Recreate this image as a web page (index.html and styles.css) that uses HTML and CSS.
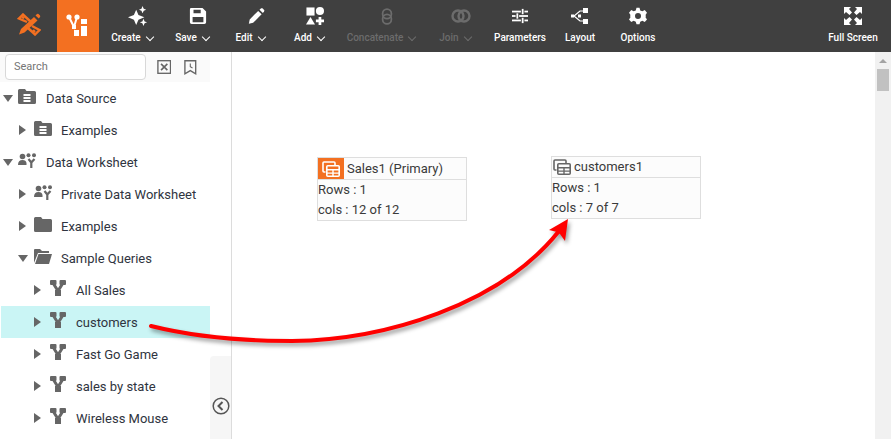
FILE: index.html
```html
<!DOCTYPE html>
<html>
<head>
<meta charset="utf-8">
<title>Data Block Composer</title>
<link rel="stylesheet" href="styles.css">
</head>
<body>
<div class="toolbar">
	<div class="logo">
		<svg width="24" height="23" viewBox="0 0 24 23"><g fill="none" stroke="#f37021" stroke-width="2.400"><path d="M10 9 L2 5.500 L6 1.500 L14 9"/><path d="M5 3.500 L7 5.500"/><path d="M15 13 L22.500 17 L18 21.500 L11 15"/><path d="M18 19 L16 17"/></g><path d="M4 16 L17 4 L20.500 7.500 L7.500 19.500 L2 21.500 Z" fill="#f37021"/><path d="M18.500 2.500 L20 1 Q21 0.500 21.500 1 L23 2.500 Q23.500 3.500 23 4 L21.800 5.500 Z" fill="#f37021"/></svg>
	</div>
	<div class="brand">
		<svg width="24" height="24" viewBox="0 0 24 24" fill="#fff"><circle cx="3" cy="4" r="2.600"/><circle cx="11" cy="4" r="2.600"/><path d="M3 4 L8 14 L11 4" fill="none" stroke="#fff" stroke-width="2"/><rect x="6" y="12" width="4" height="4"/><rect x="8" y="17" width="5" height="6"/><rect x="15" y="6" width="6" height="5"/><rect x="15" y="13" width="6" height="10"/></svg>
	</div>
	<div class="tool t-create has-menu">
		<svg width="20" height="24" viewBox="0 0 22 24" fill="#fff"><path d="M9 5 L11.500 11 L18 13.500 L11.500 16 L9 22 L6.500 16 L0 13.500 L6.500 11 Z"/><path d="M16 1 L17.300 4 L20 5 L17.300 6.200 L16 9 L14.800 6.200 L12 5 L14.800 4 Z"/><path d="M17 15 L18.300 18 L21 19 L18.300 20 L17 23 L15.800 20 L13 19 L15.800 18 Z"/></svg>
		<span class="label">Create <i class="chev"></i></span>
	</div>
	<div class="tool t-save has-menu">
		<svg width="18" height="24" viewBox="0 0 20 20" fill="#fff"><path fill-rule="evenodd" d="M2 1 H15 L19 5 V17 Q19 19 17 19 H3 Q1 19 1 17 V3 Q1 1 2 1 Z M5 3 V7 H13 V3 Z M4 11 V17 H16 V11 Z"/><rect x="10" y="3.500" width="2" height="3" fill="#404040"/></svg>
		<span class="label">Save <i class="chev"></i></span>
	</div>
	<div class="tool t-edit has-menu">
		<svg width="17" height="24" viewBox="0 0 20 20" fill="#fff"><path d="M1 19 L2 14 L12 4 L16 8 L6 18 Z"/><path d="M13.500 2.500 L15.500 1 Q16.500 0.500 17 1 L19 3 Q19.500 3.700 19 4.500 L17.500 6.500 Z"/></svg>
		<span class="label">Edit <i class="chev"></i></span>
	</div>
	<div class="tool t-add has-menu">
		<svg width="18" height="24" viewBox="0 0 20 20" fill="#fff"><rect x="0.500" y="0.500" width="9" height="9"/><circle cx="15.500" cy="4.500" r="4.500"/><path d="M5 11 L10 19.500 H0 Z"/><path d="M14 11 H17 V14 H20 V17 H17 V20 H14 V17 H11 V14 H14 Z"/></svg>
		<span class="label">Add <i class="chev"></i></span>
	</div>
	<div class="tool t-concat off has-menu">
		<svg width="14" height="24" viewBox="0 0 16 24" fill="none" stroke="#6c6c6c" stroke-width="2"><rect x="3" y="4" width="10" height="11" rx="5"/><rect x="3" y="10" width="10" height="11" rx="5"/></svg>
		<span class="label">Concatenate <i class="chev"></i></span>
	</div>
	<div class="tool t-join off has-menu">
		<svg width="20" height="24" viewBox="0 0 20 24" fill="none" stroke="#6c6c6c" stroke-width="2.400"><circle cx="7" cy="12" r="5.500"/><circle cx="13" cy="12" r="5.500"/></svg>
		<span class="label">Join <i class="chev"></i></span>
	</div>
	<div class="tool t-param">
		<svg width="16" height="24" viewBox="0 0 18 18" fill="#fff"><rect x="0" y="3" width="10" height="2"/><rect x="14" y="3" width="4" height="2"/><rect x="11" y="1" width="2" height="6"/><rect x="0" y="8" width="4" height="2"/><rect x="8" y="8" width="10" height="2"/><rect x="5" y="6" width="2" height="6"/><rect x="0" y="13" width="10" height="2"/><rect x="14" y="13" width="4" height="2"/><rect x="11" y="11" width="2" height="6"/></svg>
		<span class="label">Parameters</span>
	</div>
	<div class="tool t-layout">
		<svg width="18" height="24" viewBox="0 0 18 18"><path d="M3 9 L9 4 H13 M3 9 L9 14 H13 M7 9 H10" fill="none" stroke="#fff" stroke-width="1.200"/><rect x="0" y="7.500" width="3" height="3" fill="#fff"/><rect x="7" y="7.500" width="3" height="3" fill="#fff"/><rect x="12" y="1" width="5" height="5" fill="#fff"/><rect x="12" y="12" width="5" height="5" fill="#fff"/></svg>
		<span class="label">Layout</span>
	</div>
	<div class="tool t-options">
		<svg width="18" height="24" viewBox="0 0 24 24" fill="#fff"><path fill-rule="evenodd" d="M10 1 H14 L15 4.500 L17.800 5.700 L21 4 L24 7.500 L22 10.500 L22.500 12 L22 13.500 L24 16.500 L21 20 L17.800 18.300 L15 19.500 L14 23 H10 L9 19.500 L6.200 18.300 L3 20 L0 16.500 L2 13.500 L1.500 12 L2 10.500 L0 7.500 L3 4 L6.200 5.700 L9 4.500 Z M12 8 A4 4 0 1 0 12 16 A4 4 0 1 0 12 8 Z"/></svg>
		<span class="label">Options</span>
	</div>
	<div class="tool t-full">
		<svg width="18" height="24" viewBox="0 0 18 18" fill="#fff"><path d="M0 0 H7 L5 2 L8 5.500 L5.500 8 L2 5 L0 7 Z"/><path d="M18 0 H11 L13 2 L10 5.500 L12.500 8 L16 5 L18 7 Z"/><path d="M0 18 H7 L5 16 L8 12.500 L5.500 10 L2 13 L0 11 Z"/><path d="M18 18 H11 L13 16 L10 12.500 L12.500 10 L16 13 L18 11 Z"/></svg>
		<span class="label">Full Screen</span>
	</div>
</div>

<svg width="0" height="0" class="defs">
	<symbol id="ds" viewBox="0 0 18 15"><path fill-rule="evenodd" d="M1.500 0 H7 L8.500 2 H16.500 Q18 2 18 3.500 V13.500 Q18 15 16.500 15 H1.500 Q0 15 0 13.500 V1.500 Q0 0 1.500 0 Z M5.500 5 V7 H12.500 V5 Z M5.500 8 V10 H12.500 V8 Z M5.500 11 V13 H12.500 V11 Z"/></symbol>
	<symbol id="ws" viewBox="0 0 18 15"><circle cx="4.500" cy="3.500" r="2.800"/><path d="M0 12 Q0 7 4.500 7 Q8 7 8.500 10 V12 Z"/><circle cx="10.500" cy="2.200" r="2"/><circle cx="16" cy="2.200" r="2"/><path d="M10.500 6 L13.300 9.500 L16.500 6 M13.300 9.500 V15" fill="none" stroke="#666" stroke-width="2.200"/></symbol>
	<symbol id="q" viewBox="0 0 16 16"><rect x="0" y="0" width="6.500" height="5" rx="1"/><rect x="9.500" y="0" width="6.500" height="5" rx="1"/><rect x="5" y="10" width="6" height="6"/><path d="M3 3 L8 11 L13 3" fill="none" stroke="#666" stroke-width="3"/></symbol>
	<symbol id="tbl" viewBox="0 0 18 16"><path d="M3.500 11 H2 Q1 11 1 10 V2 Q1 1 2 1 H12 Q13 1 13 2 V4" fill="none" stroke="currentColor" stroke-width="1.600"/><rect x="4.800" y="4.800" width="12.400" height="10.400" rx="1" fill="none" stroke="currentColor" stroke-width="1.600"/><path d="M5 8 H17 V9.500 H11.700 V11.500 H17 V12.700 H11.700 V15 H10.300 V12.700 H5 V11.500 H10.300 V9.500 H5 Z" fill="currentColor"/></symbol>
</svg>

<div class="main">
	<div class="sidebar">
		<div class="search-row">
			<input class="search" placeholder="Search">
			<svg class="search-icon" width="16" height="16" viewBox="0 0 16 16" fill="none" stroke="#666" stroke-width="1.500"><rect x="1" y="1" width="14" height="14"/><path d="M4.500 4.500 L11.500 11.500 M11.500 4.500 L4.500 11.500" stroke-width="1.800"/></svg>
			<svg class="search-icon" width="14" height="17" viewBox="0 0 14 17" fill="none" stroke="#666" stroke-width="1.500"><path d="M1 1 H13 V15.500 L7 12 L1 15.500 Z"/><path d="M7 4 V7.500 L9.500 9" stroke-width="1.200"/></svg>
		</div>
		<div class="tree">
			<div class="row lvl0"><i class="tri down"></i><svg class="ico"><use href="#ds"/></svg><span>Data Source</span></div>
			<div class="row lvl1"><i class="tri"></i><svg class="ico"><use href="#ds"/></svg><span>Examples</span></div>
			<div class="row lvl0"><i class="tri down"></i><svg class="ico"><use href="#ws"/></svg><span>Data Worksheet</span></div>
			<div class="row lvl1"><i class="tri"></i><svg class="ico"><use href="#ws"/></svg><span>Private Data Worksheet</span></div>
			<div class="row lvl1"><i class="tri"></i><svg class="ico" viewBox="0 0 18 15"><path d="M1.500 0 H7 L8.500 2 H16.500 Q18 2 18 3.500 V13.500 Q18 15 16.500 15 H1.500 Q0 15 0 13.500 V1.500 Q0 0 1.500 0 Z"/></svg><span>Examples</span></div>
			<div class="row lvl1"><i class="tri down"></i><svg class="ico" viewBox="0 0 18 15"><path d="M1 0 H6 L8 2 H15 V4 H4 L0 14 V1 Q0 0 1 0 Z"/><path d="M4.500 5 H18 L15 15 H1 Z"/></svg><span>Sample Queries</span></div>
			<div class="row lvl2"><i class="tri"></i><svg class="ico qi"><use href="#q"/></svg><span>All Sales</span></div>
			<div class="row lvl2 selected"><i class="tri"></i><svg class="ico qi"><use href="#q"/></svg><span>customers</span></div>
			<div class="row lvl2"><i class="tri"></i><svg class="ico qi"><use href="#q"/></svg><span>Fast Go Game</span></div>
			<div class="row lvl2"><i class="tri"></i><svg class="ico qi"><use href="#q"/></svg><span>sales by state</span></div>
			<div class="row lvl2"><i class="tri"></i><svg class="ico qi"><use href="#q"/></svg><span>Wireless Mouse</span></div>
		</div>
		<div class="collapse">
			<svg width="18" height="18" viewBox="0 0 18 18" fill="none" stroke="#555" stroke-width="1.500"><circle cx="9" cy="9" r="7.800"/><path d="M10.500 5 L6.500 9 L10.500 13" stroke-width="2"/></svg>
		</div>
	</div>
	<div class="canvas">
		<div class="block block-sales">
			<div class="block-head"><span class="block-icon primary"><svg width="18" height="16"><use href="#tbl"/></svg></span>Sales1 (Primary)</div>
			<div class="block-body"><div>Rows : 1</div><div>cols : 12 of 12</div></div>
		</div>
		<div class="block block-customers">
			<div class="block-head"><span class="block-icon"><svg width="18" height="16"><use href="#tbl"/></svg></span>customers1</div>
			<div class="block-body"><div>Rows : 1</div><div>cols : 7 of 7</div></div>
		</div>
		<div class="scrollbar"><i class="sb-up"></i><div class="sb-thumb"></div></div>
	</div>
	<svg class="arrow" width="891" height="439" viewBox="0 0 891 439">
		<path d="M151 326 C 195 337, 245 341, 292 341 C 385 340, 500 305, 559 231" fill="none" stroke="#ff0000" stroke-width="4" stroke-linecap="round"/>
		<path d="M568 219 L549 230 L557 232 L560 234 L565 241 Z" fill="#ff0000"/>
	</svg>
</div>
</body>
</html>
```

FILE: styles.css
```css
* {
	box-sizing: border-box;
}

html, body {
	margin: 0;
	padding: 0;
	width: 891px;
	height: 439px;
	overflow: hidden;
}

body {
	font-family: Roboto, "Liberation Sans", sans-serif;
	background: #fff;
	color: #2b2b2b;
	position: relative;
}

.defs {
	position: absolute;
}

/* top bar */
.toolbar {
	display: flex;
	height: 52px;
	background: #404040;
}

.logo {
	width: 57px;
	display: flex;
	align-items: center;
	justify-content: center;
	padding-bottom: 4px;
}

.brand {
	width: 42px;
	background: #f37021;
	display: flex;
	align-items: center;
	justify-content: center;
	padding-bottom: 2px;
}

.tool {
	display: flex;
	flex-direction: column;
	align-items: center;
	padding-top: 4px;
	color: #fff;
}

.tool svg {
	display: block;
}

.has-menu svg {
	margin-left: 10px;
}

.label {
	font-size: 10px;
	font-weight: 500;
	line-height: 12px;
	margin-top: 4px;
	white-space: nowrap;
	display: flex;
	align-items: center;
}

.chev {
	display: inline-block;
	width: 6px;
	height: 6px;
	border-right: 1.6px solid #fff;
	border-bottom: 1.6px solid #fff;
	transform: rotate(45deg);
	margin: -3px 2px 0 6px;
}

.off {
	color: #6c6c6c;
}

.off .chev {
	border-color: #6c6c6c;
}

.t-create { width: 68px; }
.t-save { width: 52px; }
.t-edit { width: 64px; }
.t-add { width: 54px; }
.t-concat { width: 90px; }
.t-join { width: 58px; }
.t-param { width: 70px; }
.t-layout { width: 50px; }
.t-options { width: 66px; }
.t-full { width: 76px; margin-left: auto; }

/* left tree */
.main {
	display: flex;
	height: 387px;
	position: relative;
}

.sidebar {
	width: 232px;
	border-right: 1px solid #dcdcdc;
	position: relative;
	flex: none;
}

.search-row {
	width: 210px;
	height: 30px;
	background: #fafafa;
	display: flex;
	align-items: center;
	padding-left: 5px;
}

.search {
	width: 141px;
	height: 26px;
	border: 1px solid #d8d8d8;
	border-radius: 4px;
	background: #fff;
	font-family: Roboto, sans-serif;
	font-size: 11px;
	padding: 0 8px;
	margin-right: 11px;
	margin-top: -1px;
}

.search::placeholder {
	color: #757575;
	opacity: 1;
}

.search-icon {
	margin-right: 13px;
}

.row {
	height: 32px;
	width: 209px;
	display: flex;
	align-items: center;
	font-size: 13px;
	margin-left: 1px;
	white-space: nowrap;
	color: #2f3440;
}

.row span {
	margin-top: 1px;
}

.lvl0 { padding-left: 2px; }
.lvl1 { padding-left: 17px; }
.lvl2 { padding-left: 32px; }

.selected {
	background: #caf5f5;
}

.tri {
	width: 0;
	height: 0;
	border-style: solid;
	border-width: 5px 0 5px 7px;
	border-color: transparent transparent transparent #666;
	margin: 0 8px 0 1px;
	flex: none;
}

.tri.down {
	border-width: 7px 5px 0 5px;
	border-color: #666 transparent transparent transparent;
	margin: 0 5px 0 0;
}

.lvl1 .tri.down {
	margin-right: 6px;
}

.ico {
	width: 18px;
	height: 15px;
	fill: #666;
	margin-right: 10px;
	margin-top: -3px;
	flex: none;
}

.lvl1 .ico {
	margin-right: 9px;
}

.lvl2 .tri {
	margin-right: 9px;
}

.qi {
	width: 16px;
	height: 16px;
	margin-top: -5px;
}

.collapse {
	position: absolute;
	left: 210px;
	top: 304px;
	width: 21px;
	height: 83px;
	background: #f6f6f6;
	border-radius: 4px 0 0 0;
	padding: 41px 0 0 2px;
}

/* canvas */
.canvas {
	flex: 1;
	position: relative;
}

.block {
	position: absolute;
	width: 150px;
	height: 64px;
	border: 1px solid #dedede;
	background: #fcfcfc;
	font-size: 13px;
	color: #3a3a3a;
}

.block-sales {
	left: 85px;
	top: 105px;
}

.block-customers {
	left: 319px;
	top: 104px;
	height: 63px;
}

.block-head {
	height: 22px;
	display: flex;
	align-items: center;
	border-bottom: 1px solid #dedede;
}

.block-customers .block-head {
	height: 21px;
	padding-bottom: 1px;
}

.block-icon {
	width: 18px;
	height: 16px;
	margin: 0 3px 0 1px;
	color: #666;
	display: flex;
	justify-content: center;
}

.block-icon.primary {
	width: 26px;
	height: 21px;
	background: #f37021;
	color: #fff;
	margin: 0 3px 0 0;
	align-items: center;
}

.block-body {
	line-height: 20px;
}

.scrollbar {
	position: absolute;
	right: 0;
	top: 0;
	width: 16px;
	height: 387px;
	background: #f1f1f1;
	padding: 7px 2px 0;
}

.sb-up {
	display: block;
	width: 0;
	height: 0;
	margin: 0 auto;
	border-style: solid;
	border-width: 0 4px 4px 4px;
	border-color: transparent transparent #a3a3a3 transparent;
}

.sb-thumb {
	height: 22px;
	margin-top: 6px;
	background: #c1c1c1;
}

.arrow {
	position: absolute;
	left: 0;
	top: -52px;
	pointer-events: none;
	filter: drop-shadow(2px 3px 2px rgba(0,0,0,.4));
}
```
